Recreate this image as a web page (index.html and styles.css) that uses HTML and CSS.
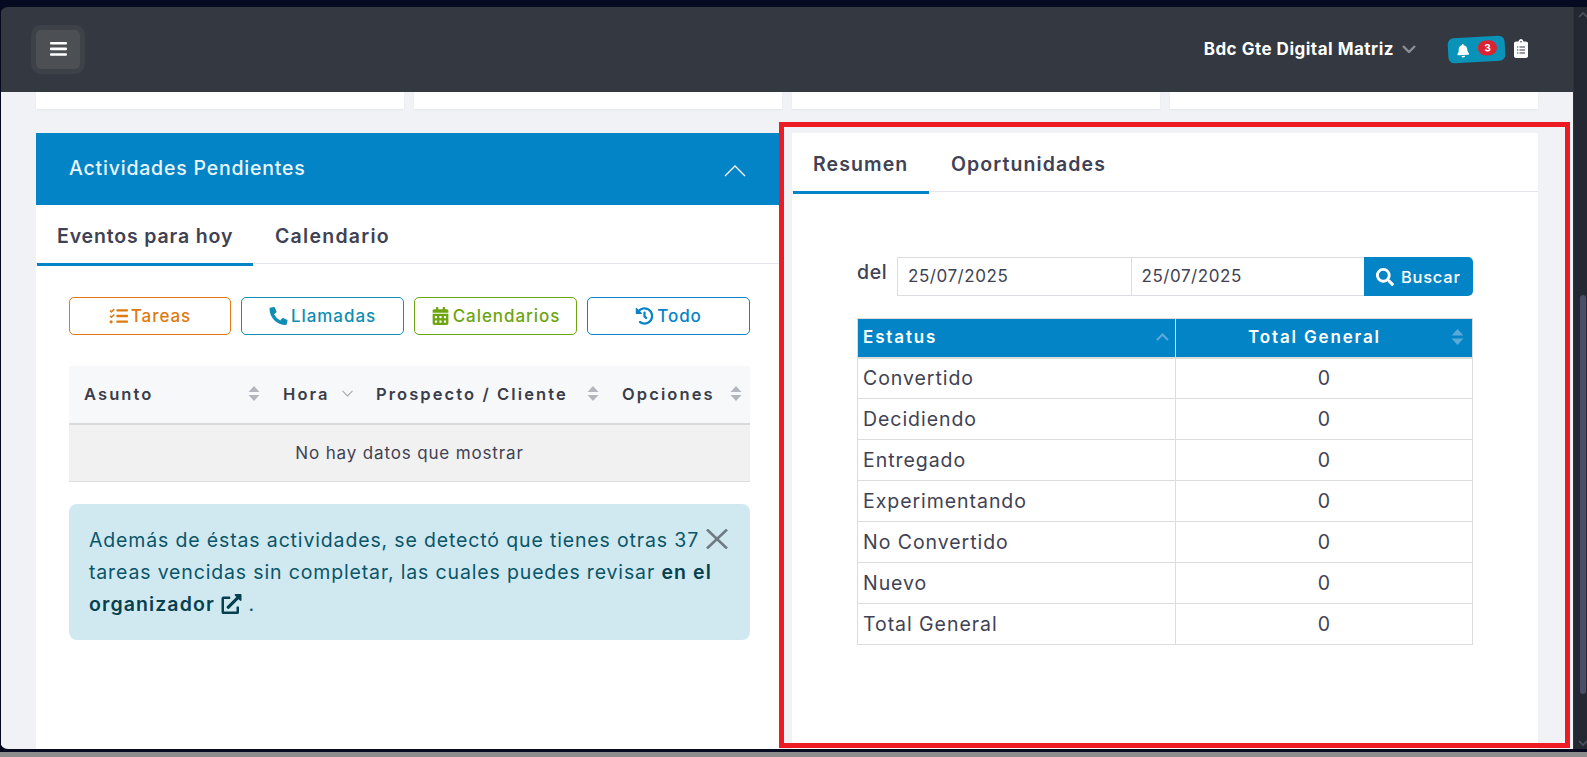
FILE: index.html
```html
<!DOCTYPE html>
<html lang="es">
<head>
<meta charset="utf-8">
<title>Actividades Pendientes</title>
<link rel="stylesheet" href="styles.css">
</head>
<body>
<div class="strip-top"></div>
<div class="window">
  <div class="main">
    <header class="topbar">
      <div class="menu-btn">
        <svg class="menu-icon" viewBox="0 0 17 14"><rect y="0" width="17" height="2.6" rx="1"/><rect y="5.6" width="17" height="2.6" rx="1"/><rect y="11.2" width="17" height="2.6" rx="1"/></svg>
      </div>
      <div class="topbar-right">
        <span class="user-name">Bdc Gte Digital Matriz</span>
        <svg class="user-chev" viewBox="0 0 14 8"><path d="M1 1l6 6 6-6" fill="none" stroke="#8b8e94" stroke-width="2.400"/></svg>
        <div class="bell-pill">
          <svg class="bell" viewBox="0 0 448 512"><path fill="#fff" d="M224 512c35.32 0 63.97-28.65 63.97-64H160.03c0 35.35 28.65 64 63.97 64zm215.39-149.71c-19.32-20.76-55.47-51.99-55.47-154.29 0-77.7-54.48-139.9-127.94-155.16V32c0-17.67-14.32-32-31.98-32s-31.98 14.33-31.98 32v20.84C118.56 68.1 64.08 130.3 64.08 208c0 102.3-36.15 133.53-55.47 154.29-6 6.45-8.66 14.16-8.61 21.71.11 16.4 12.98 32 32.1 32h383.8c19.12 0 32-15.6 32.1-32 .05-7.55-2.61-15.27-8.61-21.71z"/></svg>
          <span class="badge">3</span>
        </div>
        <svg class="clip" viewBox="0 0 14 19"><path fill="#fff" d="M2 2.500h2.600C4.800 1.100 5.800 0 7 0s2.200 1.100 2.400 2.500H12c1.100 0 2 .9 2 2V17c0 1.100-.9 2-2 2H2c-1.100 0-2-.9-2-2V4.500c0-1.100.9-2 2-2z"/><g fill="#343840"><rect x="3" y="7.500" width="1.300" height="1"/><rect x="5.500" y="7.500" width="5.500" height="1"/><rect x="3" y="10.500" width="1.300" height="1"/><rect x="5.500" y="10.500" width="5.500" height="1"/><rect x="3" y="13.500" width="1.300" height="1"/><rect x="5.500" y="13.500" width="5.500" height="1"/><circle cx="7" cy="2.800" r=".8"/></g></svg>
      </div>
    </header>
    <main class="content">
      <div class="cards">
        <div class="card"></div><div class="card"></div><div class="card"></div><div class="card"></div>
      </div>
      <div class="panels">
        <section class="panel">
          <div class="panel-head">
            <span class="panel-title">Actividades Pendientes</span>
            <svg class="panel-chev" viewBox="0 0 22 12"><path d="M1 11L11 1l10 10" fill="none" stroke="#fff" stroke-width="1.300"/></svg>
          </div>
          <nav class="tabs tabs-left">
            <span class="tab tab-active tab-eventos">Eventos para hoy</span>
            <span class="tab tab-cal">Calendario</span>
          </nav>
          <div class="panel-body">
            <div class="filters">
              <a class="filter filter-orange">
                <svg class="ficon" viewBox="0 0 18 15"><path d="M1 2.300l1.300 1.300L5 1M1 7.300l1.300 1.300L5 6" fill="none" stroke="currentColor" stroke-width="1.400"/><circle cx="2" cy="13" r="1.500" fill="currentColor"/><rect x="7" y="1" width="11" height="2.200" rx=".6" fill="currentColor"/><rect x="7" y="6.400" width="11" height="2.200" rx=".6" fill="currentColor"/><rect x="7" y="11.800" width="11" height="2.200" rx=".6" fill="currentColor"/></svg>
                Tareas
              </a>
              <a class="filter filter-teal">
                <svg class="ficon" viewBox="0 0 512 512"><path fill="currentColor" d="M497.39 361.8l-112-48a24 24 0 0 0-28 6.900l-49.600 60.600A370.660 370.660 0 0 1 130.600 204.110l60.600-49.600a23.940 23.940 0 0 0 6.900-28l-48-112A24.160 24.160 0 0 0 122.600.610l-104 24A24 24 0 0 0 0 48c0 256.500 207.900 464 464 464a24 24 0 0 0 23.400-18.600l24-104a24.290 24.290 0 0 0-14.010-27.600z"/></svg>
                Llamadas
              </a>
              <a class="filter filter-green">
                <svg class="ficon" viewBox="0 0 448 512"><path fill="currentColor" d="M0 464c0 26.500 21.500 48 48 48h352c26.500 0 48-21.500 48-48V192H0v272zm320-196c0-6.600 5.400-12 12-12h40c6.600 0 12 5.400 12 12v40c0 6.600-5.400 12-12 12h-40c-6.600 0-12-5.400-12-12v-40zm0 128c0-6.600 5.400-12 12-12h40c6.600 0 12 5.400 12 12v40c0 6.600-5.400 12-12 12h-40c-6.600 0-12-5.400-12-12v-40zM192 268c0-6.600 5.400-12 12-12h40c6.600 0 12 5.400 12 12v40c0 6.600-5.400 12-12 12h-40c-6.600 0-12-5.400-12-12v-40zm0 128c0-6.600 5.400-12 12-12h40c6.600 0 12 5.400 12 12v40c0 6.600-5.400 12-12 12h-40c-6.600 0-12-5.400-12-12v-40zM64 268c0-6.600 5.400-12 12-12h40c6.600 0 12 5.400 12 12v40c0 6.600-5.400 12-12 12H76c-6.600 0-12-5.400-12-12v-40zm0 128c0-6.600 5.400-12 12-12h40c6.600 0 12 5.400 12 12v40c0 6.600-5.400 12-12 12H76c-6.600 0-12-5.400-12-12v-40zM400 64h-48V16c0-8.800-7.200-16-16-16h-32c-8.800 0-16 7.200-16 16v48H160V16c0-8.800-7.200-16-16-16h-32c-8.800 0-16 7.200-16 16v48H48C21.500 64 0 85.500 0 112v48h448v-48c0-26.500-21.500-48-48-48z"/></svg>
                Calendarios
              </a>
              <a class="filter filter-blue">
                <svg class="ficon" viewBox="0 0 512 512"><path fill="currentColor" d="M504 255.531c.253 136.640-111.180 248.372-247.820 248.468-59.015.042-113.223-20.530-155.822-54.911-11.077-8.940-11.905-25.541-1.839-35.607l11.267-11.267c8.609-8.609 22.353-9.551 31.891-1.984C173.062 425.135 212.781 440 256 440c101.705 0 184-82.311 184-184 0-101.705-82.311-184-184-184-48.814 0-93.149 18.969-126.068 49.932l50.754 50.754c10.080 10.080 2.941 27.314-11.313 27.314H24c-8.837 0-16-7.163-16-16V38.627c0-14.254 17.234-21.393 27.314-11.314l49.372 49.372C129.209 34.136 189.552 8 256 8c136.810 0 247.747 110.780 248 247.531zm-180.912 78.784l9.823-12.630c8.138-10.463 6.253-25.542-4.210-33.679L288 256.349V152c0-13.255-10.745-24-24-24h-16c-13.255 0-24 10.745-24 24v135.651l65.409 50.874c10.463 8.137 25.541 6.253 33.679-4.210z"/></svg>
                Todo
              </a>
            </div>
            <table class="act-table">
              <colgroup><col class="c-asunto"><col class="c-hora"><col class="c-prospecto"><col class="c-opciones"></colgroup>
              <thead>
                <tr>
                  <th class="th-asunto"><div class="th-in"><span>Asunto</span><svg class="sort" viewBox="0 0 11 15"><path d="M5.500 0L11 6H0zM5.500 15L0 9h11z" fill="#b3b6bd"/></svg></div></th>
                  <th class="th-hora"><div class="th-in"><span>Hora</span><svg class="hora-chev" viewBox="0 0 11 7"><path d="M.5.8l5 5 5-5" fill="none" stroke="#a8abb2" stroke-width="1.200"/></svg></div></th>
                  <th class="th-prospecto"><div class="th-in"><span>Prospecto / Cliente</span><svg class="sort" viewBox="0 0 11 15"><path d="M5.500 0L11 6H0zM5.500 15L0 9h11z" fill="#b3b6bd"/></svg></div></th>
                  <th class="th-opciones"><div class="th-in"><span>Opciones</span><svg class="sort" viewBox="0 0 11 15"><path d="M5.500 0L11 6H0zM5.500 15L0 9h11z" fill="#b3b6bd"/></svg></div></th>
                </tr>
              </thead>
              <tbody><tr><td colspan="4" class="empty">No hay datos que mostrar</td></tr></tbody>
            </table>
            <div class="alert">
              <p class="alert-text">Además de éstas actividades, se detectó que tienes otras 37<br>tareas vencidas sin completar, las cuales puedes revisar <strong>en el<br>organizador</strong> <svg class="ext" viewBox="0 0 512 512"><path fill="currentColor" d="M432 320H400a16 16 0 0 0-16 16V448H64V128H208a16 16 0 0 0 16-16V80a16 16 0 0 0-16-16H48A48 48 0 0 0 0 112V464a48 48 0 0 0 48 48H400a48 48 0 0 0 48-48V336A16 16 0 0 0 432 320ZM488 0h-128c-21.370 0-32.050 25.910-17 41l35.730 35.730L135 320.370a24 24 0 0 0 0 34L157.670 377a24 24 0 0 0 34 0L435.280 133.320 471 169c15 15 41 4.500 41-17V24A24 24 0 0 0 488 0Z"/></svg> .</p>
              <svg class="alert-x" viewBox="0 0 22 20"><path d="M1 .5l20 19M21 .5l-20 19" fill="none" stroke="#6f7b80" stroke-width="2.600"/></svg>
            </div>
          </div>
        </section>
        <section class="panel">
          <nav class="tabs tabs-right">
            <span class="tab tab-active tab-resumen">Resumen</span>
            <span class="tab tab-oport">Oportunidades</span>
          </nav>
          <div class="summary">
            <div class="range">
              <label class="range-label">del</label>
              <div class="range-group">
                <span class="date date-a">25/07/2025</span>
                <span class="date date-b">25/07/2025</span>
                <button class="search-btn"><svg class="search-icon" viewBox="0 0 512 512"><path fill="#fff" d="M505 442.700L405.300 343c-4.500-4.500-10.600-7-17-7H372c27.600-35.300 44-79.700 44-128C416 93.100 322.900 0 208 0S0 93.100 0 208s93.100 208 208 208c48.300 0 92.700-16.400 128-44v16.300c0 6.400 2.500 12.500 7 17l99.700 99.700c9.400 9.400 24.600 9.400 33.900 0l28.300-28.300c9.400-9.400 9.400-24.600.1-34zM208 336c-70.700 0-128-57.200-128-128 0-70.700 57.200-128 128-128 70.700 0 128 57.200 128 128 0 70.700-57.200 128-128 128z"/></svg>Buscar</button>
              </div>
            </div>
            <table class="sum-table">
              <colgroup><col class="c-status"><col class="c-total"></colgroup>
              <thead>
                <tr>
                  <th class="sth-status"><div class="th-in"><span>Estatus</span><svg class="up-chev" viewBox="0 0 13 8"><path d="M1 7l5.500-5.500L12 7" fill="none" stroke="#5aa9d8" stroke-width="2.200"/></svg></div></th>
                  <th class="sth-total"><div class="sth-total-in"><span>Total General</span><svg class="sort sort-light" viewBox="0 0 11 15"><path d="M5.500 0L11 6H0zM5.500 15L0 9h11z" fill="#5aa9d8"/></svg></div></th>
                </tr>
              </thead>
              <tbody>
                <tr><td>Convertido</td><td class="num">0</td></tr>
                <tr><td>Decidiendo</td><td class="num">0</td></tr>
                <tr><td>Entregado</td><td class="num">0</td></tr>
                <tr><td>Experimentando</td><td class="num">0</td></tr>
                <tr><td>No Convertido</td><td class="num">0</td></tr>
                <tr><td>Nuevo</td><td class="num">0</td></tr>
                <tr><td>Total General</td><td class="num">0</td></tr>
              </tbody>
            </table>
          </div>
        </section>
      </div>
    </main>
  </div>
  <div class="scrollbar">
    <svg class="sb-arrow" viewBox="0 0 10 6"><path d="M1 5l4-4 4 4" fill="none" stroke="#4d5260" stroke-width="1.600"/></svg>
    <div class="sb-track"><div class="sb-thumb"></div></div>
    <svg class="sb-arrow" viewBox="0 0 10 6"><path d="M1 1l4 4 4-4" fill="none" stroke="#4d5260" stroke-width="1.600"/></svg>
  </div>
</div>
<div class="strip-bottom"></div>
<div class="strip-gray"></div>
<div class="highlight"></div>
</body>
</html>
```
FILE: styles.css
```css
* { box-sizing: border-box; }
html, body { margin: 0; padding: 0; }
body {
  width: 1587px;
  height: 757px;
  overflow: hidden;
  display: flex;
  flex-direction: column;
  background: #050a20;
  font-family: Inter, "Noto Sans", sans-serif;
  color: #3f4254;
  position: relative;
}
.strip-top { height: 7px; flex: none; background: #050a20; }
.strip-bottom { height: 3px; flex: none; background: #050a20; }
.strip-gray { height: 5px; flex: none; background: #8d8d8d; }
.window {
  height: 742px;
  flex: none;
  display: flex;
  padding-left: 1px;
  border-radius: 8px 0 0 8px;
  overflow: hidden;
}
.main { width: 1572px; display: flex; flex-direction: column; overflow: hidden; }

/* top bar */
.topbar {
  height: 85px;
  flex: none;
  background: #343840;
  display: flex;
  align-items: center;
  justify-content: space-between;
  padding: 0 45px 0 35px;
}
.menu-btn {
  width: 44px;
  height: 39px;
  margin-top: -1px;
  border-radius: 5px;
  background: #4c5055;
  box-shadow: 0 0 0 5px #3d4148;
  display: flex;
  align-items: center;
  justify-content: center;
}
.menu-icon { width: 17px; height: 14px; fill: #fff; }
.topbar-right { display: flex; align-items: center; margin-top: -1px; }
.user-name { font-size: 17px; font-weight: 700; color: #fff; letter-spacing: .5px; white-space: nowrap; }
.user-chev { width: 14px; height: 8px; margin-left: 8px; }
.bell-pill {
  width: 57px;
  height: 25px;
  margin-left: 32px;
  border-radius: 6px;
  background: #0a93b8;
  transform: rotate(-3deg);
  display: flex;
  align-items: center;
  padding-left: 9px;
}
.bell { width: 12px; height: 14px; }
.badge {
  width: 19px;
  height: 15px;
  margin-left: 9px;
  margin-top: -3px;
  border-radius: 8px;
  background: #dc2330;
  color: #fff;
  font-size: 10px;
  font-weight: 700;
  line-height: 15px;
  text-align: center;
}
.clip { width: 14px; height: 19px; margin-left: 9px; margin-top: -2px; }

/* content */
.content { flex: 1; background: #f0f2f5; padding: 0 35px 0 35px; overflow: hidden; }
.cards { display: grid; grid-template-columns: repeat(4, 368px); gap: 10px; height: 17px; }
.card { background: #fff; box-shadow: 0 1px 2px rgba(0,0,0,.05); }
.panels { margin-top: 24px; display: grid; grid-template-columns: 746px 746px; gap: 10px; }
.panel { background: #fff; height: 640px; }
.panel-head {
  height: 72px;
  background: #0384c6;
  display: flex;
  align-items: center;
  justify-content: space-between;
  padding: 0 36px 0 33px;
}
.panel-title { font-size: 19.5px; font-weight: 500; color: #e9f5fc; letter-spacing: .8px; margin-top: -2px; }
.panel-chev { width: 22px; height: 12px; margin-top: 3px; }
.tabs { display: flex; border-bottom: 1px solid #e4e6ef; padding-left: 1px; height: 59px; }
.tab {
  font-size: 19.5px;
  font-weight: 600;
  letter-spacing: .85px;
  color: #3f4254;
  padding: 3px 20px 0;
  display: flex;
  align-items: center;
  margin-bottom: -3px;
  border-bottom: 3px solid transparent;
  white-space: nowrap;
}
.tab-active { border-bottom-color: #0384c6; }
.tab-eventos { width: 216px; margin-right: 2px; }
.tab-cal { letter-spacing: 1.25px; }
.tab-resumen { width: 136px; margin-right: 2px; letter-spacing: 1.1px; }
.tab-oport { letter-spacing: 1.1px; }
.panel-body { padding: 33px 32px 0 33px; }
.filters { display: grid; grid-template-columns: 162px 163px 163px 163px; gap: 10px; }
.filter {
  height: 38px;
  border: 1px solid currentColor;
  border-radius: 5px;
  display: flex;
  align-items: center;
  justify-content: center;
  gap: 3px;
  font-size: 17px;
  font-weight: 500;
  letter-spacing: .95px;
}
.ficon { width: 19px; height: 18px; }
.filter-orange { color: #dd7a10; }
.filter-teal { color: #0f8db3; }
.filter-green { color: #6ca50f; }
.filter-blue { color: #0584c8; }

/* activity table */
.act-table { width: 681px; margin-top: 31px; border-collapse: collapse; table-layout: fixed; }
.c-asunto { width: 199px; }
.c-hora { width: 93px; }
.c-prospecto { width: 246px; }
.c-opciones { width: 143px; }
.act-table th {
  height: 58px;
  background: #f7f8fa;
  border-bottom: 2px solid #d9d9d9;
  padding: 0 8px 2px 15px;
  text-align: left;
  font-size: 16.5px;
  font-weight: 600;
  letter-spacing: 2.1px;
  color: #3a3d4a;
}
.th-in { display: flex; align-items: center; justify-content: space-between; white-space: nowrap; }
.sort { width: 12px; height: 15px; flex: none; }
.hora-chev { width: 11px; height: 7px; }
.empty {
  height: 57px;
  background: #f1f1f1;
  border-bottom: 1px solid #dcdcdc;
  text-align: center;
  font-size: 17px;
  letter-spacing: .85px;
  color: #3f4254;
}

/* alert */
.alert {
  margin-top: 22px;
  height: 136px;
  border-radius: 8px;
  background: #d0e9f1;
  color: #0a5568;
  padding: 20px 0 0 20px;
  position: relative;
}
.alert-text { margin: 0; font-size: 19.5px; line-height: 32px; letter-spacing: .85px; white-space: nowrap; }
.alert-text strong { font-weight: 600; color: #06404f; letter-spacing: 1.1px; }
.ext { width: 21px; height: 20px; vertical-align: -3px; color: #06404f; }
.alert-x { position: absolute; right: 22px; top: 25px; width: 22px; height: 20px; }

/* summary */
.summary { padding: 65px 65px 0 65px; }
.range { display: flex; align-items: flex-start; gap: 9px; }
.range-label { width: 31px; font-size: 19.5px; font-weight: 500; line-height: 30px; letter-spacing: .6px; }
.range-group { width: 576px; height: 39px; display: flex; }
.date {
  height: 39px;
  border: 1px solid #dcdde2;
  border-right: 0;
  background: #fff;
  font-size: 17px;
  line-height: 37px;
  letter-spacing: .55px;
  padding-left: 10px;
}
.date-a { width: 233.5px; }
.date-b { width: 233px; }
.search-btn {
  flex: 1;
  height: 39px;
  border: 0;
  padding: 0;
  background: #0384c6;
  border-radius: 0 5px 5px 0;
  color: #fff;
  font-family: inherit;
  font-size: 16.5px;
  font-weight: 500;
  letter-spacing: .75px;
  display: flex;
  align-items: center;
  justify-content: center;
  gap: 7px;
}
.search-icon { width: 18px; height: 18px; }
.sum-table { width: 615px; margin-top: 22px; border-collapse: collapse; table-layout: fixed; }
.c-status { width: 318px; }
.c-total { width: 297px; }
.sum-table th {
  height: 39px;
  background: #0384c6;
  color: #fff;
  font-size: 17px;
  font-weight: 600;
  letter-spacing: 1.85px;
  border: 1px solid #dcdcdc;
  border-bottom: 2px solid #dcdcdc;
  padding: 0 6px 1px 5px;
  text-align: left;
}
.sum-table th.sth-total { padding: 0 8px 1px 0; }
.sth-status { border-right-color: #cfe3f0; }
.up-chev { width: 13px; height: 8px; }
.sth-total-in { display: flex; align-items: center; justify-content: space-between; padding-left: 72px; white-space: nowrap; }
.sort-light { width: 13px; height: 16px; }
.sum-table td {
  height: 41px;
  border: 1px solid #dcdcdc;
  padding: 0 5px;
  font-size: 19.5px;
  letter-spacing: .95px;
  color: #3f4254;
}
.sum-table td.num { text-align: center; padding-right: 4px; }

/* scrollbar */
.scrollbar {
  width: 14px;
  background: #242833;
  border-left: 1px solid #2f333f;
  display: flex;
  flex-direction: column;
  align-items: center;
  padding: 5px 0 3px 4px;
}
.sb-arrow { width: 10px; height: 6px; flex: none; }
.sb-track { flex: 1; padding-top: 277px; display: flex; flex-direction: column; }
.sb-thumb { width: 6px; height: 399px; border-radius: 3px; background: #4a4e69; }

/* review highlight drawn over the page */
.highlight {
  position: absolute;
  left: 779px;
  top: 122px;
  width: 791px;
  height: 626px;
  border: 5px solid #ed1c24;
  pointer-events: none;
}
```
